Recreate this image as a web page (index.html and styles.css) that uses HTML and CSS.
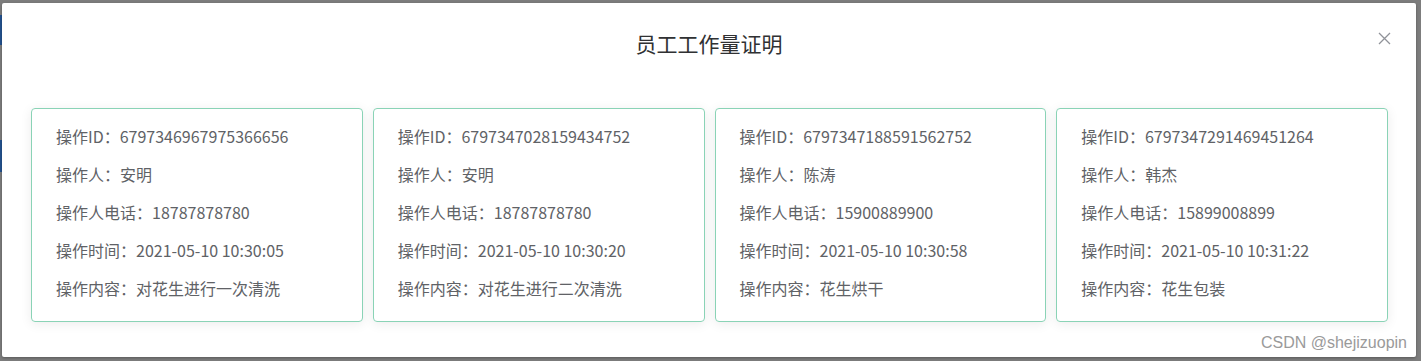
FILE: index.html
```html
<!DOCTYPE html>
<html lang="zh-CN">
<head>
  <meta charset="UTF-8">
  <meta name="viewport" content="width=device-width, initial-scale=1.0">
  <title>员工工作量证明</title>
  <link rel="stylesheet" href="styles.css">
</head>
<body>
  <div class="page">
    <div class="edge">
      <div class="edge-block first"></div>
      <div class="edge-block second"></div>
    </div>
    <div class="dialog">
      <div class="dialog-header">
        <span class="dialog-title">员工工作量证明</span>
        <button class="dialog-close" aria-label="关闭">
          <svg width="13" height="13" viewBox="0 0 13 13">
            <path d="M1 1 L12 12 M12 1 L1 12" stroke="#909399" stroke-width="1.3" fill="none"/>
          </svg>
        </button>
      </div>
      <div class="dialog-body">
        <div class="cards">
          <div class="card">
            <p>操作ID：6797346967975366656</p>
            <p>操作人：安明</p>
            <p>操作人电话：18787878780</p>
            <p>操作时间：2021-05-10 10:30:05</p>
            <p>操作内容：对花生进行一次清洗</p>
          </div>
          <div class="card">
            <p>操作ID：6797347028159434752</p>
            <p>操作人：安明</p>
            <p>操作人电话：18787878780</p>
            <p>操作时间：2021-05-10 10:30:20</p>
            <p>操作内容：对花生进行二次清洗</p>
          </div>
          <div class="card">
            <p>操作ID：6797347188591562752</p>
            <p>操作人：陈涛</p>
            <p>操作人电话：15900889900</p>
            <p>操作时间：2021-05-10 10:30:58</p>
            <p>操作内容：花生烘干</p>
          </div>
          <div class="card">
            <p>操作ID：6797347291469451264</p>
            <p>操作人：韩杰</p>
            <p>操作人电话：15899008899</p>
            <p>操作时间：2021-05-10 10:31:22</p>
            <p>操作内容：花生包装</p>
          </div>
        </div>
      </div>
      <span class="watermark">CSDN @shejizuopin</span>
    </div>
  </div>
</body>
</html>
```

FILE: styles.css
```css
body {
  margin: 0;
  padding: 0;
  background: #7d7d7d;
  font-family: "Microsoft YaHei", "Noto Sans CJK SC", "Noto Sans", sans-serif;
  overflow: hidden;
}

.page {
  display: flex;
  height: 361px;
  box-sizing: border-box;
  padding: 3px 5px 4px 0;
}

.edge {
  width: 2px;
  flex-shrink: 0;
  padding-top: 12px;
}

.edge-block {
  background: #23528f;
  height: 30px;
}

.edge-block.second {
  margin-top: 95px;
  height: 32px;
}

.dialog {
  flex: 1;
  position: relative;
  background: #fff;
  border-radius: 2px;
  box-shadow: 0 1px 3px rgba(0, 0, 0, 0.3);
}

.dialog-header {
  position: relative;
  height: 80px;
  padding-top: 28px;
  box-sizing: border-box;
  text-align: center;
}

.dialog-title {
  font-size: 21px;
  line-height: 24px;
  color: #303133;
}

.dialog-close {
  position: absolute;
  top: 29px;
  right: 25px;
  padding: 0;
  border: none;
  background: transparent;
  cursor: pointer;
  line-height: 0;
}

.dialog-body {
  padding: 25px 28px 0 29px;
}

.cards {
  display: grid;
  grid-template-columns: repeat(4, 1fr);
  gap: 10px;
}

.card {
  border: 1px solid #8ad3b6;
  border-radius: 4px;
  box-shadow: 0 2px 12px 0 rgba(0, 0, 0, 0.08);
  padding: 8px 24px 14px;
  height: 214px;
  box-sizing: border-box;
}

.card p {
  margin: 0;
  font-size: 16px;
  line-height: 38px;
  color: #606266;
  white-space: nowrap;
}

.watermark {
  position: absolute;
  right: 9px;
  bottom: 5px;
  font-family: "Liberation Sans", Arial, sans-serif;
  font-size: 16px;
  color: #9a9a9a;
}
```
